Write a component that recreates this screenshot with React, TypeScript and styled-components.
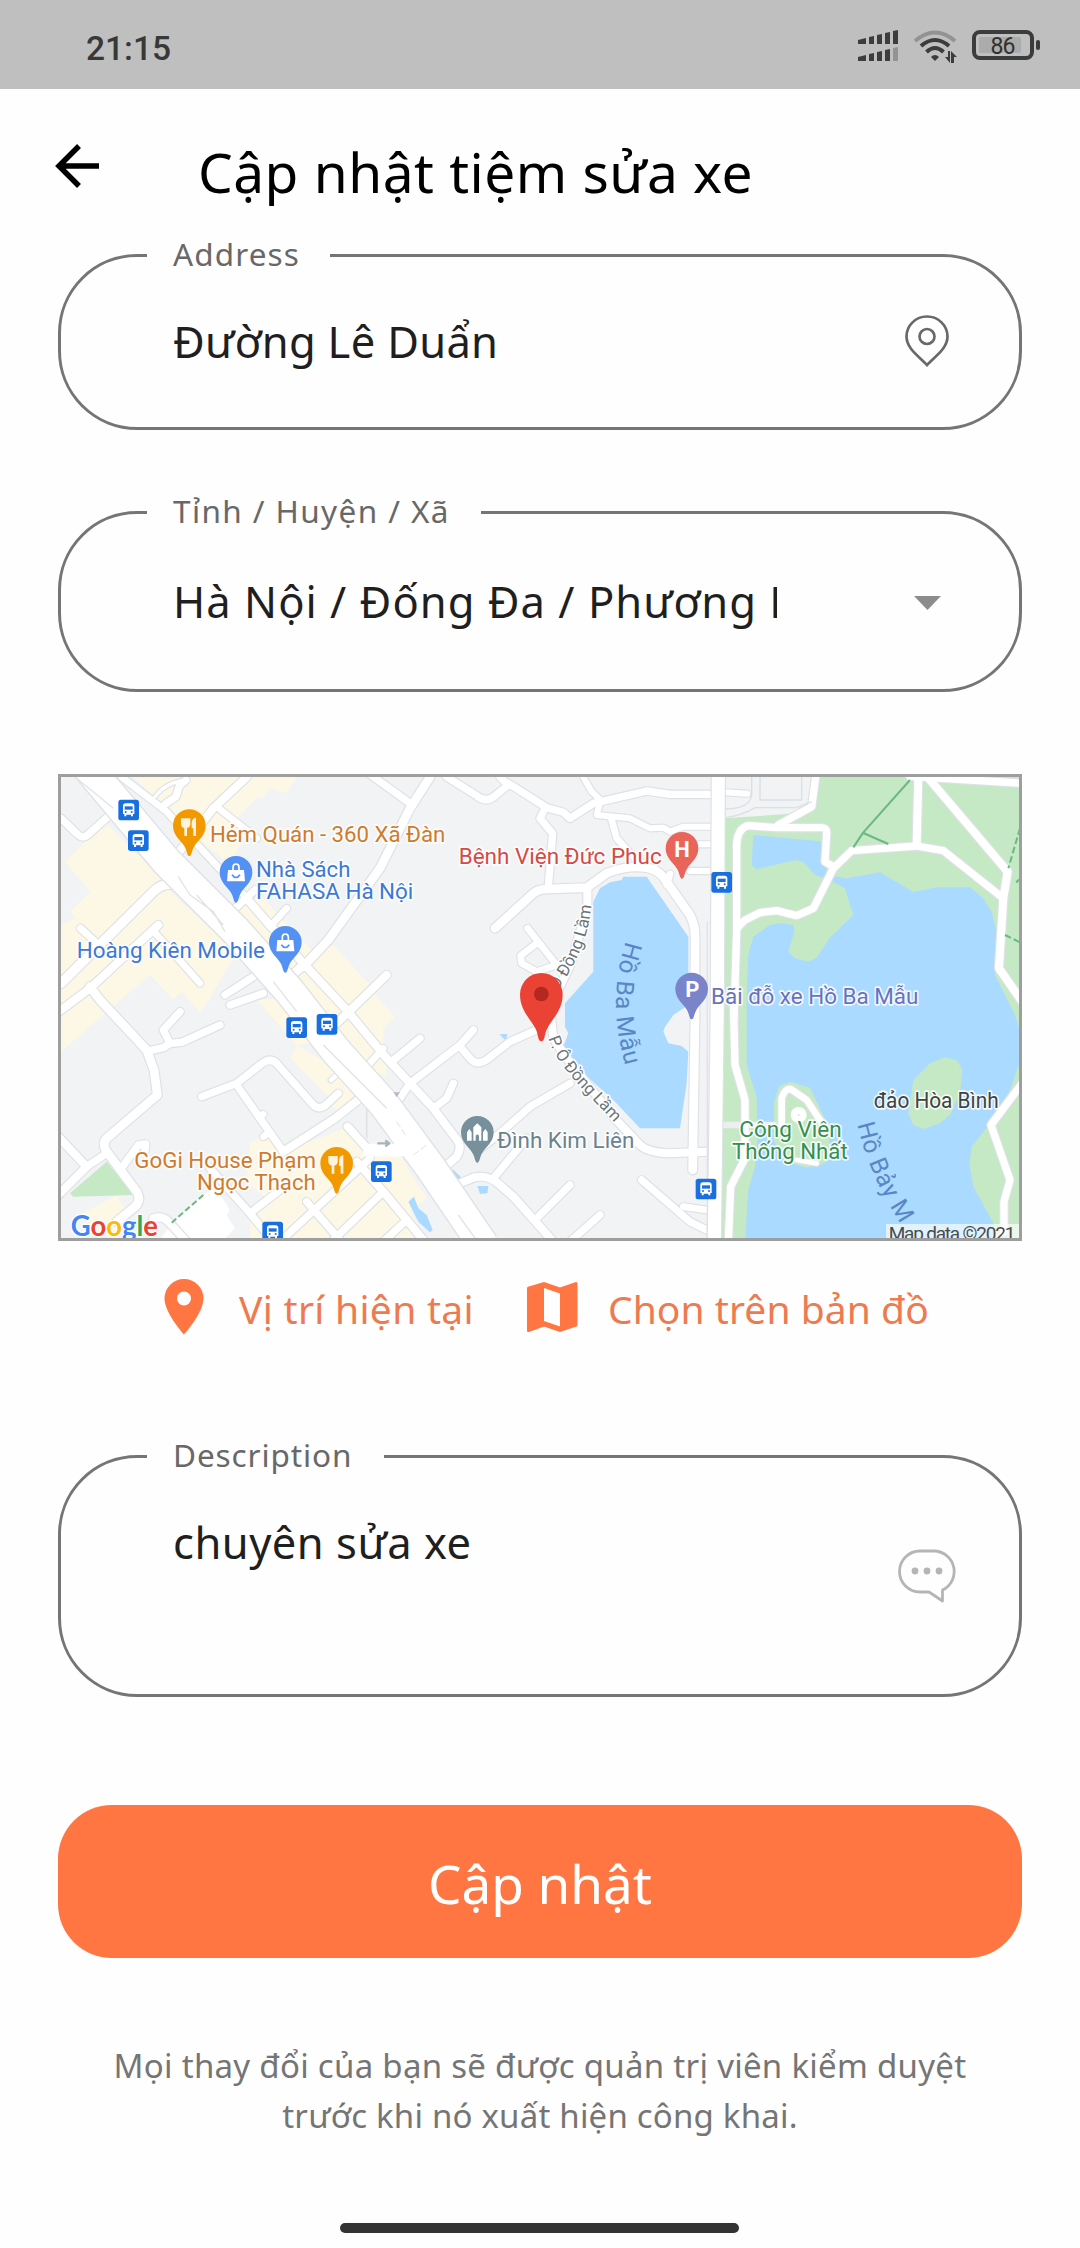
import React from "react";
import styled, { createGlobalStyle } from "styled-components";

const GlobalStyle = createGlobalStyle`
  * { box-sizing: border-box; }
  body { margin: 0; background: #fefefe; }
`;

const Screen = styled.div`
  width: 1080px;
  height: 2248px;
  overflow: hidden;
  display: flex;
  flex-direction: column;
  background: #fefefe;
  font-family: "Noto Sans", "Open Sans", sans-serif;
`;

const StatusBar = styled.header`
  height: 89px;
  flex: none;
  padding: 8px 40px 0 86px;
  display: flex;
  align-items: center;
  justify-content: space-between;
  background: #bfbfbf;
`;

const Clock = styled.span`
  font: 500 33.5px/40px Roboto, sans-serif;
  color: #383838;
`;

const StatusIcons = styled.svg`
  width: 184px;
  height: 34px;
  margin-top: -5px;
  flex: none;
`;

const AppBar = styled.div`
  height: 146px;
  flex: none;
  display: flex;
  align-items: flex-start;
  padding-left: 55px;
`;

const BackButton = styled.button`
  width: 45px;
  height: 44px;
  margin: 55px 98px 0 0;
  padding: 0;
  border: 0;
  background: none;
  display: flex;
`;

const Title = styled.h1<{ $track: number }>`
  margin: 45px 0 0;
  font-size: 55px;
  line-height: 76px;
  font-weight: 400;
  letter-spacing: ${(p) => p.$track}px;
  white-space: nowrap;
  color: #000;
`;

const Form = styled.form`
  flex: none;
  padding: 0 58px;
  display: flex;
  flex-direction: column;
`;

const Field = styled.fieldset<{ $height: number; $gap: number }>`
  height: ${(p) => p.$height}px;
  margin: 0 0 ${(p) => p.$gap}px;
  min-width: 0;
  padding: 0 60px 0 112px;
  border: 3px solid #757575;
  border-radius: 79px;
`;

const Legend = styled.legend<{ $width: number; $track: number }>`
  width: ${(p) => p.$width}px;
  height: 40px;
  margin-left: -26px;
  padding: 0 0 0 26px;
  font-size: 31.5px;
  line-height: 38px;
  letter-spacing: ${(p) => p.$track}px;
  white-space: nowrap;
  color: #686868;
`;

const FieldBody = styled.div<{ $top: number }>`
  display: flex;
  justify-content: space-between;
  align-items: flex-start;
  padding-top: ${(p) => p.$top}px;
`;

const Value = styled.div<{ $track: number }>`
  width: 604px;
  overflow: hidden;
  font-size: 43.5px;
  line-height: 60px;
  letter-spacing: ${(p) => p.$track}px;
  white-space: nowrap;
  color: #1f1f1f;
`;

const IconSlot = styled.span<{ $top?: number }>`
  width: 64px;
  height: 60px;
  margin-top: ${(p) => p.$top ?? 0}px;
  flex: none;
  display: flex;
  align-items: center;
  justify-content: center;
`;

const MapFrame = styled.div`
  height: 467px;
  border: 3px solid #9e9e9e;
  svg { display: block; width: 100%; height: 100%; }
`;

const Actions = styled.div`
  height: 195px;
  padding: 33px 0 0 106px;
  display: flex;
  align-items: flex-start;
`;

const Action = styled.button<{ $width: number; $track: number; $gap: number }>`
  width: ${(p) => p.$width}px;
  height: 66px;
  padding: 0;
  border: 0;
  background: none;
  display: flex;
  align-items: center;
  gap: ${(p) => p.$gap}px;
  font: 400 39px/54px "Noto Sans", sans-serif;
  letter-spacing: ${(p) => p.$track}px;
  white-space: nowrap;
  color: #ee7b50;
  span { padding-top: 3px; }
  svg { flex: none; }
`;

const Submit = styled.button`
  height: 153px;
  padding: 5px 0 0;
  border: 0;
  border-radius: 54px;
  background: #ff7643;
  color: #fff;
  font: 400 53px/72px "Noto Sans", sans-serif;
`;

const Hint = styled.p`
  margin: 83px 0 0;
  text-align: center;
  font-size: 33px;
  line-height: 50px;
  white-space: nowrap;
  color: #757575;
`;

const HintLine = styled.span<{ $track: number }>`
  display: block;
  letter-spacing: ${(p) => p.$track}px;
`;

const HomeBar = styled.div`
  width: 399px;
  height: 10px;
  margin: auto auto 15px 340px;
  border-radius: 5px;
  background: #333;
`;

/* Map artwork: three drawing units per screen pixel. */

const blocks = [
  "M165 170 330 335 360 380 560 560 475 710 450 740 395 680 370 705 300 630 160 750 33 860 33 480 75 460 60 440 120 380 45 290Z",
  "M250 36H740L710 85 660 70 640 100 625 95 560 160 590 200 540 300 420 200Z",
  "M560 440 630 390 740 510 800 570 850 540 960 660 985 700 1035 755 1000 790 1000 850 1010 930 960 930 850 810 700 640Z",
  "M620 705 690 700 800 830 740 840Z",
  "M740 840 720 880 830 990 850 1030 890 1050 930 990 860 910Z",
  "M600 1135 640 1110 700 1155 820 1115 880 1090 950 1160 1045 1160 1080 1220 1130 1300 1080 1340 1130 1425H600V1370L660 1310 590 1250Z",
  "M90 1350 200 1290 235 1350 200 1420 120 1400Z",
  "M33 1245 45 1260 33 1280Z",
];

const greens = [
  "M2025 160 2200 148 2290 140 2300 36H2920V1430H2012Z",
  "M170 1190 250 1290 70 1295 60 1285Z",
];

const waters = [
  "M2110 210 2325 230 2330 330 2390 340 2490 322 2590 381 2660 367H2760L2800 400 2825 440 2840 500 2835 630 2895 750 2910 800V890L2880 975 2820 1075 2765 1145 2758 1195 2770 1265 2830 1375V1430H2085L2095 1275 2115 1205 2122 1125 2120 995 2090 900V705L2095 570 2110 515 2160 480 2190 475 2230 480 2233 500 2215 560 2235 580 2275 590 2300 578 2340 518 2410 450 2385 370 2340 345 2295 330 2260 290 2235 285 2120 313 2105 300Z",
  "M1715 345 1720 335H1790L1915 515V720L1870 750 1845 785 1840 800 1855 835 1895 843 1915 860 1910 955 1890 1090H1770L1690 1005 1545 875 1540 845 1555 805 1545 785V715L1630 620V410L1650 370 1680 352Z",
  "M1075 1310 1092 1295 1105 1330 1130 1350 1148 1395 1140 1402 1105 1370Z",
  "M1207 1212 1232 1235 1230 1243 1208 1238Z",
  "M1282 1263H1315L1312 1285 1290 1287Z",
  "M1348 808 1372 807 1368 827Z",
];

const islands = [
  "M2172 1010 2188 962 2220 950 2280 968 2330 1070 2345 1180 2318 1198 2270 1208 2225 1195 2172 1130Z",
  "M2590 945 2640 895 2685 877 2720 885 2737 915 2730 985 2700 1050 2670 1075 2620 1092 2590 1080 2575 1045Z",
];

type Road = [string, number];

const roads: Road[] = [
  ["M33 160 85 210Q100 222 115 208L180 150", 22],
  ["M315 95Q350 50 410 45", 10],
  ["M345 118 378 95 388 62 408 45", 22],
  ["M590 36 490 130 380 270", 24],
  ["M500 125 620 220", 20],
  ["M215 36 350 140 480 280 590 400 660 485 710 430", 20],
  ["M545 440 615 375", 22],
  ["M590 400 760 595 890 735 1010 880 1080 955 1150 1030 1225 1130Q1235 1150 1220 1175L1180 1210", 24],
  ["M380 360Q340 350 310 380L33 655", 28],
  ["M92 490 140 535", 22],
  ["M325 480 120 670 20 745", 24],
  ["M310 498 450 655", 20],
  ["M120 665 150 705 290 855 312 915 322 990 170 1120Q155 1135 170 1160L260 1280Q275 1305 255 1325L200 1370", 26],
  ["M525 690 610 635", 22],
  ["M540 720 640 685", 22],
  ["M760 605 835 525 990 310 1080 130 1140 36", 26],
  ["M700 655 760 600", 26],
  ["M860 775 1010 630", 24],
  ["M955 900 1000 850", 20],
  ["M960 28 1080 115", 22],
  ["M1190 36 1280 92Q1310 118 1340 88L1375 60 1350 36", 22],
  ["M1375 55 1490 128 1540 142 1560 160 1630 115 1790 78 1860 88H2000", 22],
  ["M1485 130 1470 160 1508 205 1495 365", 22],
  ["M1335 490 1450 385Q1465 373 1490 372L1610 368 1670 325Q1730 300 1790 308 1830 315 1850 350L1920 450Q1935 480 1935 510V760L1928 1215", 26],
  ["M1612 370V430L1560 600 1500 730 1510 820 1550 880 1690 1055 1770 1140Q1790 1160 1850 1165L1975 1160", 24],
  ["M1600 36 1625 80 1652 105 1640 150 1740 160 1800 190 1840 188 1860 200 1900 185H1985", 18],
  ["M1685 165 1700 220 1750 275 1800 310", 20],
  ["M1920 318H1985", 18],
  ["M1940 238H1985", 18],
  ["M1860 327 1850 360", 20],
  ["M1433 490 1520 600 1460 620 1415 595 1412 572 1460 535", 20],
  ["M1270 795 1230 840 1080 955 1040 1015", 22],
  ["M1230 845 1262 882Q1280 902 1308 886L1380 830 1470 790", 22],
  ["M1110 820 1025 890", 22],
  ["M1210 955 1190 1000 1150 1030", 22],
  ["M1560 955 1440 1025 1350 1105 1280 1160", 22],
  ["M1430 1120 1330 1240", 22],
  ["M1200 1268 1270 1238Q1310 1228 1340 1252L1390 1295 1510 1430", 24],
  ["M1560 1260 1460 1360", 22],
  ["M1650 1350 1560 1430", 22],
  ["M1775 1245 1920 1370 1970 1395", 22],
  ["M1900 1325 1970 1335", 20],
  ["M390 740 340 795 360 835 340 848 295 858", 22],
  ["M360 835 395 832 510 780", 22],
  ["M455 995 560 955 630 900Q660 875 680 895L790 1020Q805 1035 825 1022L865 985", 22],
  ["M560 960 700 1160", 22],
  ["M630 1055 640 1048M640 1115 655 1105", 20],
  ["M700 1160 855 1060 930 1000", 24],
  ["M843 945 860 930", 14],
  ["M20 1110 110 1205 20 1295", 24],
  ["M110 1205 170 1165M210 1215 265 1140 287 1137 285 1155", 22],
  ["M893 1085 960 1160M920 1190 1000 1280 1120 1425", 24],
  ["M1000 1280 850 1425M1070 1365 1000 1430M960 1180 690 1430", 22],
  ["M480 1210 600 1345 670 1430M600 1345 690 1275", 22],
  ["M770 1310 870 1425", 22],
  ["M310 1360Q340 1350 360 1375L410 1430", 24],
  ["M2025 82 2092 86", 18],
];

const parkRoads: Road[] = [
  ["M2052 760 2060 500V240Q2062 190 2095 182L2180 188H2315Q2332 188 2330 205L2325 290 2350 305", 22],
  ["M2185 180 2285 125 2297 36", 22],
  ["M2060 490 2085 465 2130 443 2180 437 2240 452 2290 430 2350 310 2405 257 2500 250 2600 243 2680 257 2860 400", 22],
  ["M2605 36 2600 240", 24],
  ["M2640 45 2873 320 2860 400 2847 610 2920 715", 24],
  ["M2580 34 2920 55", 22],
  ["M2050 705 2055 900 2085 1005 2085 1180 2042 1265 2035 1430", 22],
  ["M2920 950 2823 1080 2880 1245 2862 1310V1400", 22],
  ["M2195 1080V1000Q2205 970 2222 972L2270 1005 2320 1080", 20],
  ["M2240 1185 2300 1195", 14],
];

const lines = (list: Road[]) => (
  <g fill="none" strokeLinecap="round" strokeLinejoin="round">
    {list.map(([d, w], i) => <path key={`c${i}`} d={d} stroke="#dfe1e5" strokeWidth={w + 7} />)}
    {list.map(([d, w], i) => <path key={`r${i}`} d={d} stroke="#fff" strokeWidth={w} />)}
  </g>
);

const Bus = ({ x, y }: { x: number; y: number }) => (
  <g transform={`translate(${x} ${y})`}>
    <rect x="-31" y="-31" width="62" height="62" rx="8" fill="#1a6fe0" />
    <path d="M-17 12V-12Q-17 -20 -9 -20H9Q17 -20 17 -12V12H13V19H7V14H-7V19H-13V12Z" fill="#fff" />
    <path d="M-12 -11H12V-1H-12Z" fill="#1a6fe0" />
    <circle cx="-9" cy="6" r="3" fill="#1a6fe0" /><circle cx="9" cy="6" r="3" fill="#1a6fe0" />
  </g>
);

const Pin = ({ x, y, fill, children }: { x: number; y: number; fill: string; children: React.ReactNode }) => (
  <g transform={`translate(${x} ${y})`}>
    <path d="M0 91C-7 91 -6 78 -14 63 -26 43 -49 30 -49 0A49 49 0 0 1 49 0C49 30 26 43 14 63 6 78 7 91 0 91Z" fill={fill} />
    {children}
  </g>
);

const Food = () => (
  <g fill="#fff3e0">
    <path d="M-25 -22H3V-6Q3 5 -7 7V31H-15V7Q-25 5 -25 -6Z" />
    <path d="M20 -24V31H12V8H7V-10Q9 -24 20 -24Z" />
  </g>
);

const Bag = () => (
  <g>
    <path d="M-24 -7H24L27 27H-27Z" fill="#fff" />
    <path d="M-9 -7V-15Q-9 -25 0 -25T9 -15V-7" fill="none" stroke="#fff" strokeWidth="5" />
    <path d="M-12 7Q0 24 12 7" fill="none" stroke="#5491f5" strokeWidth="5" />
  </g>
);

const MapLabel = styled.text<{ $fill: string; $size?: number }>`
  font-family: Roboto, sans-serif;
  font-size: ${(p) => p.$size ?? 68}px;
  fill: ${(p) => p.$fill};
  stroke: rgba(255, 255, 255, 0.85);
  stroke-width: 10px;
  stroke-linejoin: round;
  paint-order: stroke;
`;

const PathLabel = styled.text<{ $fill: string; $size: number; $halo?: boolean }>`
  font-family: Roboto, sans-serif;
  font-size: ${(p) => p.$size}px;
  fill: ${(p) => p.$fill};
  stroke: ${(p) => (p.$halo ? "#fff" : "none")};
  stroke-width: 9px;
  stroke-linejoin: round;
  paint-order: stroke;
`;

const PinLetter = styled.text`
  font: 700 66px Roboto, sans-serif;
  fill: #fff;
  text-anchor: middle;
`;

const Google = styled.text`
  font: 700 84px Lato, sans-serif;
  stroke: #fff;
  stroke-width: 8px;
  paint-order: stroke;
`;

const labels: [string, number, number, number, string][] = [
  ["Hẻm Quán - 360 Xã Đàn", 480, 230, 706, "#cf7b2c"],
  ["Nhà Sách", 618, 335, 283, "#3c79d6"],
  ["FAHASA Hà Nội", 618, 402, 472, "#3c79d6"],
  ["Hoàng Kiên Mobile", 80, 578, 565, "#3c79d6"],
  ["Bệnh Viện Đức Phúc", 1226, 297, 609, "#d64a44"],
  ["Bãi đỗ xe Hồ Ba Mẫu", 1983, 718, 622, "#6a72c0"],
  ["Đình Kim Liên", 1341, 1150, 412, "#6b828e"],
  ["GoGi House Phạm", 253, 1208, 545, "#cf7b2c"],
  ["Ngọc Thạch", 441, 1275, 356, "#cf7b2c"],
  ["Công Viên", 2068, 1115, 307, "#358f50"],
  ["Thống Nhất", 2046, 1183, 347, "#358f50"],
  ["đảo Hòa Bình", 2471, 1030, 375, "#40443f"],
];

const LocationMap = () => (
  <svg viewBox="33 36 2874 1383" preserveAspectRatio="none">
    <defs>
      <path id="lake" d="M1728 528C1690 650 1685 770 1732 920" />
      <path id="lake2" d="M2422 1078C2448 1190 2490 1290 2600 1450" />
      <path id="street-up" d="M1522 678C1575 600 1620 520 1625 400" />
      <path id="street-down" d="M1495 820C1525 910 1590 960 1700 1080" />
    </defs>
    <rect x="0" y="0" width="3000" height="1500" fill="#f1f3f4" />
    {blocks.map((d) => <path key={d} d={d} fill="#fdf8e6" />)}
    <path d="M460 1290 500 1270 540 1335 530 1350 555 1390 520 1425H330L370 1370Z" fill="#fff" />
    {greens.map((d) => <path key={d} d={d} fill="#c5e8c5" />)}
    {waters.map((d) => <path key={d} d={d} fill="#aadaff" />)}
    {islands.map((d) => <path key={d} d={d} fill="#c5e8c5" />)}
    {lines(roads)}
    <path d="M2018 1080H2180" stroke="#eceeef" strokeWidth="20" />
    {lines(parkRoads)}
    <circle cx="2246" cy="1050" r="24" fill="#fff" /><circle cx="2246" cy="1050" r="3" fill="#d8e8d8" />
    <g fill="none" strokeLinejoin="round">
      <path d="M90 -20 350 290 560 500 720 680 860 860 1000 1015 1140 1205 1300 1440" stroke="#dfe1e5" strokeWidth="98" />
      <path d="M90 -20 350 290 560 500 720 680 860 860 1000 1015 1140 1205 1300 1440" stroke="#fff" strokeWidth="90" />
      <path d="M940 1155H1100" stroke="#fff" strokeWidth="38" />
      <path d="M75 36 190 130M385 335 420 390 490 440 525 500M440 390 520 480M670 650 740 740M820 840 1010 1030M1225 1350 1290 1440" stroke="#e1e3e6" strokeWidth="4" />
      <path d="M1040 1070 1070 1115M1090 1170 1130 1140" stroke="#dfe1e5" strokeWidth="3" strokeDasharray="20 8" />
      <path d="M950 1030V1120" stroke="#dfe1e5" strokeWidth="5" />
      <path d="M1990 20 1984 700 1972 1430" stroke="#d9dce0" strokeWidth="4" />
      <path d="M1972 470V1430" stroke="#e0e2e6" strokeWidth="4" />
      <path d="M2005 20 2002 705 1993 1430" stroke="#dfe1e5" strokeWidth="46" />
      <path d="M2005 20 2002 705 1993 1430" stroke="#fff" strokeWidth="39" />
      <path d="M2130 30V105H2255V30M2105 36V90Q2100 130 2028 132M2028 158Q2080 150 2115 128H2240L2285 110" stroke="#dcdfe3" strokeWidth="4" />
      <path d="M2580 45 2440 202 2410 247M2440 204 2515 237" stroke="#6bb981" strokeWidth="6" />
      <path d="M2910 190 2875 310M2865 510 2910 532M2912 340 2900 350 2912 356" stroke="#6bb981" strokeWidth="6" strokeDasharray="20 9" />
      <path d="M365 1373 460 1290" stroke="#6bb981" strokeWidth="6" strokeDasharray="18 9" />
      <path d="M982 1135H1015M1006 1126 1018 1135 1006 1144" stroke="#a9b3ba" strokeWidth="7" />
    </g>
    <path d="M1030 982H1050L1040 997Z" fill="#b6bcc0" />

    <PathLabel $fill="#5a86c6" $size={73}><textPath href="#lake" textLength="380">Hồ Ba Mẫu</textPath></PathLabel>
    <PathLabel $fill="#5a86c6" $size={73}><textPath href="#lake2" textLength="328">Hồ Bảy M</textPath></PathLabel>
    <PathLabel $fill="#6d7579" $size={51} $halo><textPath href="#street-up">Ô Đồng Lầm</textPath></PathLabel>
    <PathLabel $fill="#6d7579" $size={50} $halo><textPath href="#street-down">P. Ô Đồng Lầm</textPath></PathLabel>

    <Pin x={418} y={182} fill="#f29900"><Food /></Pin>
    <Pin x={860} y={1195} fill="#f29900"><Food /></Pin>
    <Pin x={558} y={322} fill="#5491f5"><Bag /></Pin>
    <Pin x={706} y={532} fill="#5491f5"><Bag /></Pin>
    <Pin x={1896} y={250} fill="#e9645b"><PinLetter x="0" y="25">H</PinLetter></Pin>
    <Pin x={1925} y={672} fill="#7a84ca"><PinLetter x="2" y="25">P</PinLetter></Pin>
    <Pin x={1282} y={1102} fill="#78909c">
      <path d="M-31 25V0L-24 -10 -17 0V25ZM31 25V0L24 -10 17 0V25ZM-12 25V-15L0 -27 12 -15V25H5V10Q0 3 -5 10V25Z" fill="#fff" />
    </Pin>
    <Bus x={236} y={135} /><Bus x={265} y={227} /><Bus x={740} y={788} /><Bus x={831} y={778} />
    <Bus x={994} y={1220} /><Bus x={668} y={1401} /><Bus x={2015} y={352} /><Bus x={1968} y={1272} />

    {labels.map(([t, x, y, w, c]) => (
      <MapLabel key={t} x={x} y={y} textLength={w} lengthAdjust="spacingAndGlyphs" $fill={c}>{t}</MapLabel>
    ))}

    <path d="M1474 829C1462 829 1466 808 1456 790 1437 755 1410 735 1410 688A64 64 0 0 1 1538 688C1538 735 1511 755 1492 790 1482 808 1486 829 1474 829Z" fill="#ea4335" />
    <circle cx="1474" cy="687" r="22" fill="#b3281f" />

    <Google x="62" y="1412" textLength="262" lengthAdjust="spacingAndGlyphs">
      <tspan fill="#4285f4">G</tspan><tspan fill="#ea4335">o</tspan><tspan fill="#fbbc05">o</tspan>
      <tspan fill="#4285f4">g</tspan><tspan fill="#34a853">l</tspan><tspan fill="#ea4335">e</tspan>
    </Google>
    <rect x="2508" y="1377" width="420" height="60" fill="#fff" fillOpacity="0.65" />
    <text x="2516" y="1424" fontFamily="Roboto" fontSize="57" fill="#4a4a4a" textLength="380">Map data ©2021</text>
  </svg>
);

export default function App() {
  return (
    <Screen>
      <GlobalStyle />
      <StatusBar>
        <Clock>21:15</Clock>
        <StatusIcons viewBox="857 31 184 34">
          <g fill="#3c3c3c">
            <path d="M859 42 867 40V46H859ZM870 39 875 38V46H870ZM878 37 883 36V46H878ZM886 35 891 34V46H886ZM894 33 899 32V46H894Z" />
            <path d="M859 59 867 57V63H859ZM870 56 875 55V63H870ZM878 54 883 53V63H878ZM886 52 891 51V63H886Z" />
            <path d="M894 50 899 49V63H894Z" fill="#939393" />
            <path d="M932 59Q936 55 940 59L936 63Z" />
            <path d="M946 59 951 65V53H949V59ZM952 65V53L958 59H955V65Z" />
            <rect x="1037" y="42" width="4" height="10" rx="2" />
          </g>
          <g fill="none" strokeWidth="4">
            <path d="M916 43Q936 26 956 43" stroke="#939393" />
            <path d="M922 48Q936 36 950 48M927.500 54Q936 46 944.500 54" stroke="#3c3c3c" />
          </g>
          <rect x="980" y="39" width="42" height="16" rx="2" fill="#ababab" />
          <rect x="975" y="34" width="58" height="26" rx="6" fill="none" stroke="#3c3c3c" strokeWidth="4" />
          <text x="1004" y="55.500" fontFamily="Roboto" fontSize="23" textAnchor="middle" fill="#303030" textLength="25">86</text>
        </StatusIcons>
      </StatusBar>
      <AppBar>
        <BackButton type="button" aria-label="Back">
          <svg width="45" height="44" viewBox="0 0 45 44" fill="none" stroke="#000" strokeWidth="5.500">
            <path d="M24 2 4 22 24 42M4 22H44" />
          </svg>
        </BackButton>
        <Title $track={0.5}>Cập nhật tiệm sửa xe</Title>
      </AppBar>
      <Form>
        <Field $height={195} $gap={62}>
          <Legend $width={183} $track={1.1}>Address</Legend>
          <FieldBody $top={36}>
            <Value $track={0.3}>Đường Lê Duẩn</Value>
            <IconSlot>
              <svg width="44" height="52" viewBox="0 0 44 52" fill="none" stroke="#686868" strokeWidth="2.700">
                <path d="M22 50C15 42 1.500 34 1.500 21.500A20.500 20 0 0 1 42.500 21.500C42.500 34 29 42 22 50Z" />
                <circle cx="22" cy="21.500" r="7.500" />
              </svg>
            </IconSlot>
          </FieldBody>
        </Field>
        <Field $height={200} $gap={82}>
          <Legend $width={334} $track={1.4}>Tỉnh / Huyện / Xã</Legend>
          <FieldBody $top={39}>
            <Value $track={1.03}>Hà Nội / Đống Đa / Phương L</Value>
            <IconSlot $top={2}>
              <svg width="27" height="14" viewBox="0 0 27 14"><path d="M0 0H27L13.500 14Z" fill="#8c8c8c" /></svg>
            </IconSlot>
          </FieldBody>
        </Field>
        <MapFrame><LocationMap /></MapFrame>
        <Actions>
          <Action type="button" $width={363} $track={0.3} $gap={35}>
            <svg width="40" height="56" viewBox="0 0 40 56">
              <path fill="#ff7643" fillRule="evenodd" d="M20 0A19.500 19.500 0 0 0 .5 19.500C.5 34 20 55.500 20 55.500S39.500 34 39.500 19.500A19.500 19.500 0 0 0 20 0ZM20 12.500A7 7 0 0 1 20 26.500A7 7 0 0 1 20 12.500Z" />
            </svg>
            <span>Vị trí hiện tại</span>
          </Action>
          <Action type="button" $width={410} $track={0.05} $gap={30}>
            <svg width="51" height="50" viewBox="0 0 51 50">
              <path fill="#ff7643" fillRule="evenodd" d="M0 6Q0 5 1 4.700L17 0 33 5.500 49 0Q50.500 0 50.500 1.500V43Q50.500 44 49.500 44.400L33 50 17 44.500 2 50Q0 50.500 0 48.500ZM17 6V39L33 44.500V11.500Z" />
            </svg>
            <span>Chọn trên bản đồ</span>
          </Action>
        </Actions>
        <Field $height={261} $gap={108}>
          <Legend $width={237} $track={0.9}>Description</Legend>
          <FieldBody $top={36}>
            <Value $track={0.5}>chuyên sửa xe</Value>
            <IconSlot $top={34}>
              <svg width="58" height="54" viewBox="0 0 58 54" fill="none" stroke="#b5b5b5" strokeWidth="2.800" strokeLinejoin="round">
                <path d="M22 2H36A20.500 20.500 0 0 1 44.500 41V52L31 43H22A20.500 20.500 0 0 1 22 2Z" />
                <g fill="#b5b5b5" stroke="none"><circle cx="17" cy="22" r="3.400" /><circle cx="29" cy="22" r="3.400" /><circle cx="41" cy="22" r="3.400" /></g>
              </svg>
            </IconSlot>
          </FieldBody>
        </Field>
        <Submit type="button">Cập nhật</Submit>
        <Hint>
          <HintLine $track={0.28}>Mọi thay đổi của bạn sẽ được quản trị viên kiểm duyệt</HintLine>
          <HintLine $track={0.2}>trước khi nó xuất hiện công khai.</HintLine>
        </Hint>
      </Form>
      <HomeBar />
    </Screen>
  );
}
